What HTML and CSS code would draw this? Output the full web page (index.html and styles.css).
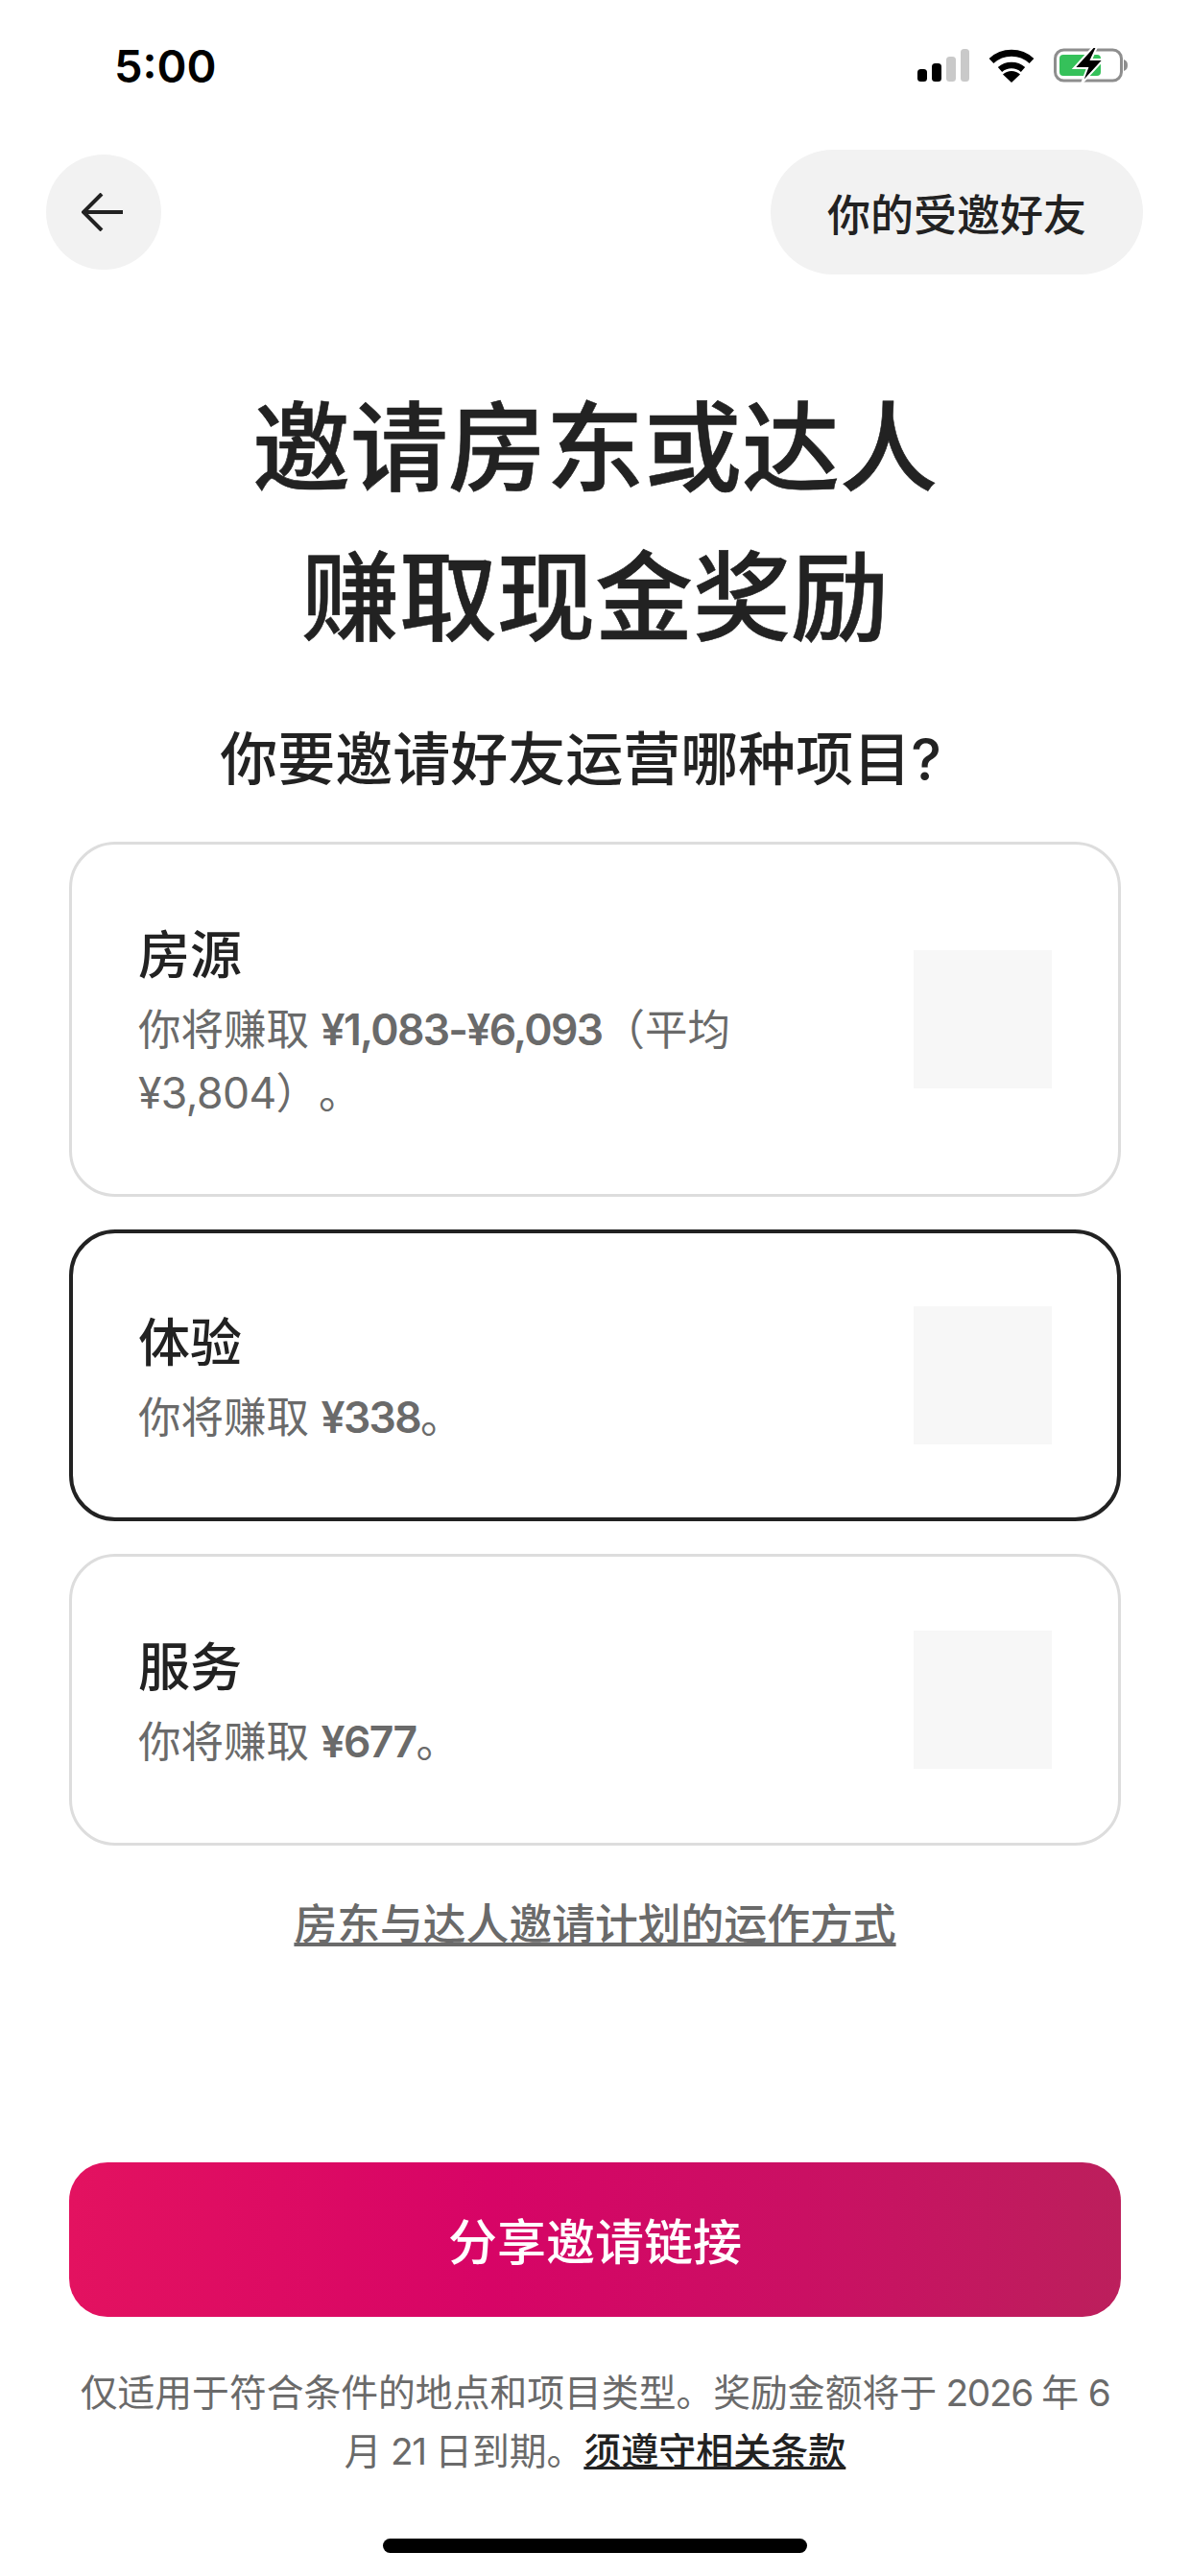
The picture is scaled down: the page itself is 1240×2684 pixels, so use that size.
FILE: index.html
```html
<!DOCTYPE html>
<html lang="zh-CN">
<head>
<meta charset="utf-8">
<title>邀请房东或达人</title>
<link rel="stylesheet" href="styles.css">
</head>
<body>
<div class="page">
  <div class="status">
    <span class="time">5:00</span>
    <div class="status-icons">
      <svg class="signal" width="54" height="34" viewBox="0 0 54 34"><rect x="0" y="21" width="10" height="13" rx="3.5" fill="#000"/><rect x="15" y="15" width="10" height="19" rx="3.5" fill="#000"/><rect x="30" y="8" width="10" height="26" rx="3.5" fill="#c9c9c9"/><rect x="45" y="0" width="9" height="34" rx="3.5" fill="#c9c9c9"/></svg>
      <svg class="wifi" width="48" height="36" viewBox="0 0 48 36"><path d="M3 13.5 A31 31 0 0 1 45 13.5" fill="none" stroke="#000" stroke-width="7"/><path d="M12 22.5 A18 18 0 0 1 36 22.5" fill="none" stroke="#000" stroke-width="6.5"/><path d="M24 36 L15 27.5 A13 13 0 0 1 33 27.5 Z" fill="#000"/></svg>
      <svg class="battery" width="78" height="38" viewBox="0 0 78 38"><rect x="1.5" y="3" width="69" height="32" rx="9" fill="#fff" stroke="#8e8e8e" stroke-width="3"/><path d="M73 13 C76 14 77 16 77 19 C77 22 76 24 73 25 Z" fill="#8e8e8e"/><rect x="6" y="8" width="43" height="22" rx="4" fill="#35c15a"/><path d="M41 0 L21 22 L35 22 L29 38 L52 13 L39 13 L45 0 Z" fill="#000" stroke="#fff" stroke-width="2"/></svg>
    </div>
  </div>

  <header class="topbar">
    <button class="back" aria-label="返回">
      <svg class="back-icon" width="44" height="40" viewBox="0 0 44 40"><path d="M43 20 H2 M21 1 L2 20 L21 39" fill="none" stroke="#222" stroke-width="4"/></svg>
    </button>
    <button class="invited">你的受邀好友</button>
  </header>

  <h1 class="title">邀请房东或达人<br>赚取现金奖励</h1>
  <h2 class="subtitle">你要邀请好友运营哪种项目?</h2>

  <div class="cards">
    <div class="card">
      <div class="card-text">
        <div class="card-title">房源</div>
        <div class="card-desc">你将赚取 <b>¥1,083-¥6,093</b>（平均<br><span class="num">¥3,804</span>）。</div>
      </div>
      <div class="thumb"></div>
    </div>
    <div class="card selected">
      <div class="card-text">
        <div class="card-title">体验</div>
        <div class="card-desc">你将赚取 <b>¥338</b>。</div>
      </div>
      <div class="thumb"></div>
    </div>
    <div class="card">
      <div class="card-text">
        <div class="card-title">服务</div>
        <div class="card-desc">你将赚取 <b>¥677</b>。</div>
      </div>
      <div class="thumb"></div>
    </div>
  </div>

  <a class="how" href="#">房东与达人邀请计划的运作方式</a>

  <button class="share">分享邀请链接</button>

  <p class="terms">仅适用于符合条件的地点和项目类型。奖励金额将于<span class="terms-num"> 2026 </span>年<span class="terms-num"> 6</span><br>月<span class="terms-num"> 21 </span>日到期。<a href="#">须遵守相关条款</a></p>

  <div class="home-bar"></div>
</div>
</body>
</html>
```

FILE: styles.css
```css
* { box-sizing: border-box; }
html, body { margin: 0; padding: 0; background: #fff; }
body {
  font-family: Inter, "Noto Sans CJK SC", sans-serif;
  color: #222;
  text-spacing-trim: space-all;
}
.page {
  width: 1240px;
  height: 2684px;
  display: flex;
  flex-direction: column;
  overflow: hidden;
}
.status {
  height: 136px;
  padding: 0 64px 0 119px;
  display: flex;
  align-items: center;
  justify-content: space-between;
}
.time {
  font-family: Inter, sans-serif;
  font-size: 47px;
  font-weight: 600;
  color: #000;
}
.status-icons {
  display: flex;
  align-items: center;
  gap: 20px;
}
.topbar {
  margin-top: 20px;
  height: 130px;
  padding: 0 49px 0 48px;
  display: flex;
  align-items: center;
  justify-content: space-between;
}
.back {
  width: 120px;
  height: 120px;
  border: 0;
  border-radius: 50%;
  background: #f2f2f2;
  padding: 0 3px 0 0;
  display: flex;
  align-items: center;
  justify-content: center;
}
.invited {
  width: 388px;
  height: 130px;
  border: 0;
  border-radius: 65px;
  background: #f2f2f2;
  font: 500 45px/1 "Noto Sans CJK SC", sans-serif;
  color: #222;
  padding: 0;
}
.title {
  margin: 103px 0 0;
  font-size: 102px;
  font-weight: 500;
  line-height: 156px;
  text-align: center;
  -webkit-text-stroke: 0.6px #222;
}
.subtitle {
  margin: 50px 0 0;
  padding-right: 30px;
  font-size: 60px;
  font-weight: 500;
  line-height: 80px;
  text-align: center;
}
.cards {
  margin: 46px 72px 0;
  display: flex;
  flex-direction: column;
  gap: 34px;
}
.card {
  border: 3px solid #ddd;
  border-radius: 48px;
  padding: 72px 69px;
  display: flex;
  align-items: center;
  justify-content: space-between;
}
.card.selected {
  border: 4px solid #222;
  padding: 71px 68px;
}
.card-title {
  font-size: 54px;
  font-weight: 500;
  line-height: 88px;
  color: #222;
}
.card-desc {
  font-size: 44.5px;
  line-height: 66px;
  color: #6a6a6a;
}
.card-desc b {
  font-weight: 600;
  letter-spacing: -1.7px;
}
.num { letter-spacing: -0.6px; }
.thumb {
  width: 144px;
  height: 144px;
  background: #f7f7f7;
  flex: none;
}
.how {
  margin-top: 49px;
  align-self: center;
  font-size: 44.8px;
  font-weight: 500;
  line-height: 66px;
  color: #6a6a6a;
  text-decoration: underline;
}
.share {
  margin: 215px 72px 0;
  height: 161px;
  border: 0;
  border-radius: 40px;
  background: linear-gradient(90deg, #e31260 0%, #d70466 40%, #ca1063 70%, #bc1f5c 100%);
  color: #fff;
  font: 500 51px/1 "Noto Sans CJK SC", sans-serif;
  padding: 0;
}
.terms {
  margin: 48px 0 0;
  font-size: 38.8px;
  line-height: 61px;
  color: #6a6a6a;
  text-align: center;
}
.terms-num { letter-spacing: -1.4px; }
.terms a {
  color: #222;
  font-size: 39px;
  font-weight: 500;
  text-decoration: underline;
}
.home-bar {
  margin: 61px auto 0;
  width: 442px;
  height: 15px;
  border-radius: 8px;
  background: #000;
}
```
